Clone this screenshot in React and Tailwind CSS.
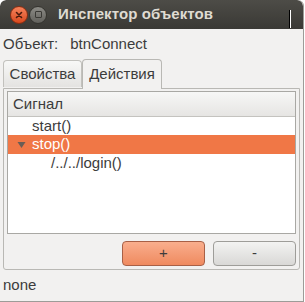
const font = { fontFamily: '"Liberation Sans", Arial, sans-serif' };

const TitleBar = () => (
  <div className="h-[29px] shrink-0 flex items-center rounded-t-[6px] bg-gradient-to-b from-[#4d4c47] to-[#3a3935] relative">
    {/* close */}
    <div className="ml-[10px] w-[18px] h-[18px] rounded-full bg-gradient-to-b from-[#f6825a] to-[#d8481b] border border-[#8a2e12] flex items-center justify-center">
      <svg width="8" height="8" viewBox="0 0 8 8">
        <path d="M1.5 1.5 L6.5 6.5 M6.5 1.5 L1.5 6.5" stroke="#4a1a0c" strokeWidth="1.6" strokeLinecap="round" />
      </svg>
    </div>
    {/* minimize */}
    <div className="ml-[1px] w-[18px] h-[18px] rounded-full bg-gradient-to-b from-[#8c8b86] to-[#62615c] border border-[#35342f] flex items-center justify-center">
      <div className="w-[7px] h-[7px] border-[1.5px] border-[#3a3935] rounded-[1px]" />
    </div>
    <span className="ml-[11px] text-[15px] font-bold text-[#dfdbd2] tracking-[0.1px]">
      Инспектор объектов
    </span>
    <div className="absolute left-[289px] top-[10px] w-[2px] h-[18px] bg-black border-r border-white" />
  </div>
);

export default function App() {
  return (
    <div style={font} className="w-[305px] h-[302px] bg-white">
      <div className="w-[304px] h-[302px] flex flex-col bg-[#f2f1f0] border-r border-b border-[#9d9c98] text-[#3c3c3c] overflow-hidden rounded-t-[6px]">
        <TitleBar />
        {/* object row */}
        <div className="h-[30px] shrink-0 flex items-center pl-[3px] text-[15px]">
          <span>Объект:</span>
          <span className="ml-[12px]">btnConnect</span>
        </div>
        {/* tabs */}
        <div className="h-[29px] shrink-0 flex items-end pl-[3px] relative z-10">
          <div className="w-[79px] h-[27px] mb-[1px] border border-[#c2c1bd] border-b-0 rounded-t-[4px] bg-gradient-to-b from-[#f8f8f7] to-[#e4e3e1] flex items-center justify-center text-[15px]">
            Свойства
          </div>
          <div className="w-[80px] h-[30px] -mb-[1px] border border-[#b9b8b4] border-b-0 rounded-t-[4px] bg-[#f2f1f0] flex items-center justify-center text-[15px] pb-[1px]">
            Действия
          </div>
        </div>
        {/* panel */}
        <div className="ml-[3px] mr-[3px] h-[182px] shrink-0 border border-[#b9b8b4] rounded-b-[3px] flex flex-col px-[3px] pt-[2px]">
          <div className="h-[143px] shrink-0 border border-[#a9a8a4] bg-white flex flex-col">
            <div className="h-[25px] shrink-0 bg-gradient-to-b from-[#f7f7f6] to-[#e6e5e3] border-b border-[#c4c3bf] flex items-center pl-[5px] text-[15px]">
              Сигнал
            </div>
            <div className="h-[18px] flex items-center pl-[24px] text-[15px]">start()</div>
            <div className="h-[19px] flex items-center bg-[#f07746] text-white text-[15px]">
              <svg width="9" height="8" viewBox="0 0 9 8" className="ml-[9px]">
                <path d="M0.5 1 L8.5 1 L4.5 7 Z" fill="#6a5d55" />
              </svg>
              <span className="ml-[6px]">stop()</span>
            </div>
            <div className="h-[19px] flex items-center pl-[43px] text-[15px]">/../../login()</div>
          </div>
          <div className="flex justify-end gap-[8px] mt-[7px]">
            <button className="w-[83px] h-[25px] rounded-[4px] border border-[#a86046] bg-gradient-to-b from-[#f9ae8d] to-[#ef8a5f] text-[15px] text-[#3c3c3c] flex items-center justify-center">
              +
            </button>
            <button className="w-[83px] h-[25px] rounded-[4px] border border-[#9e9d99] bg-gradient-to-b from-[#f3f3f2] to-[#d9d8d6] text-[15px] text-[#3c3c3c] flex items-center justify-center">
              -
            </button>
          </div>
        </div>
        <div className="flex-1 flex items-center pl-[3px] text-[15px]">none</div>
      </div>
    </div>
  );
}
